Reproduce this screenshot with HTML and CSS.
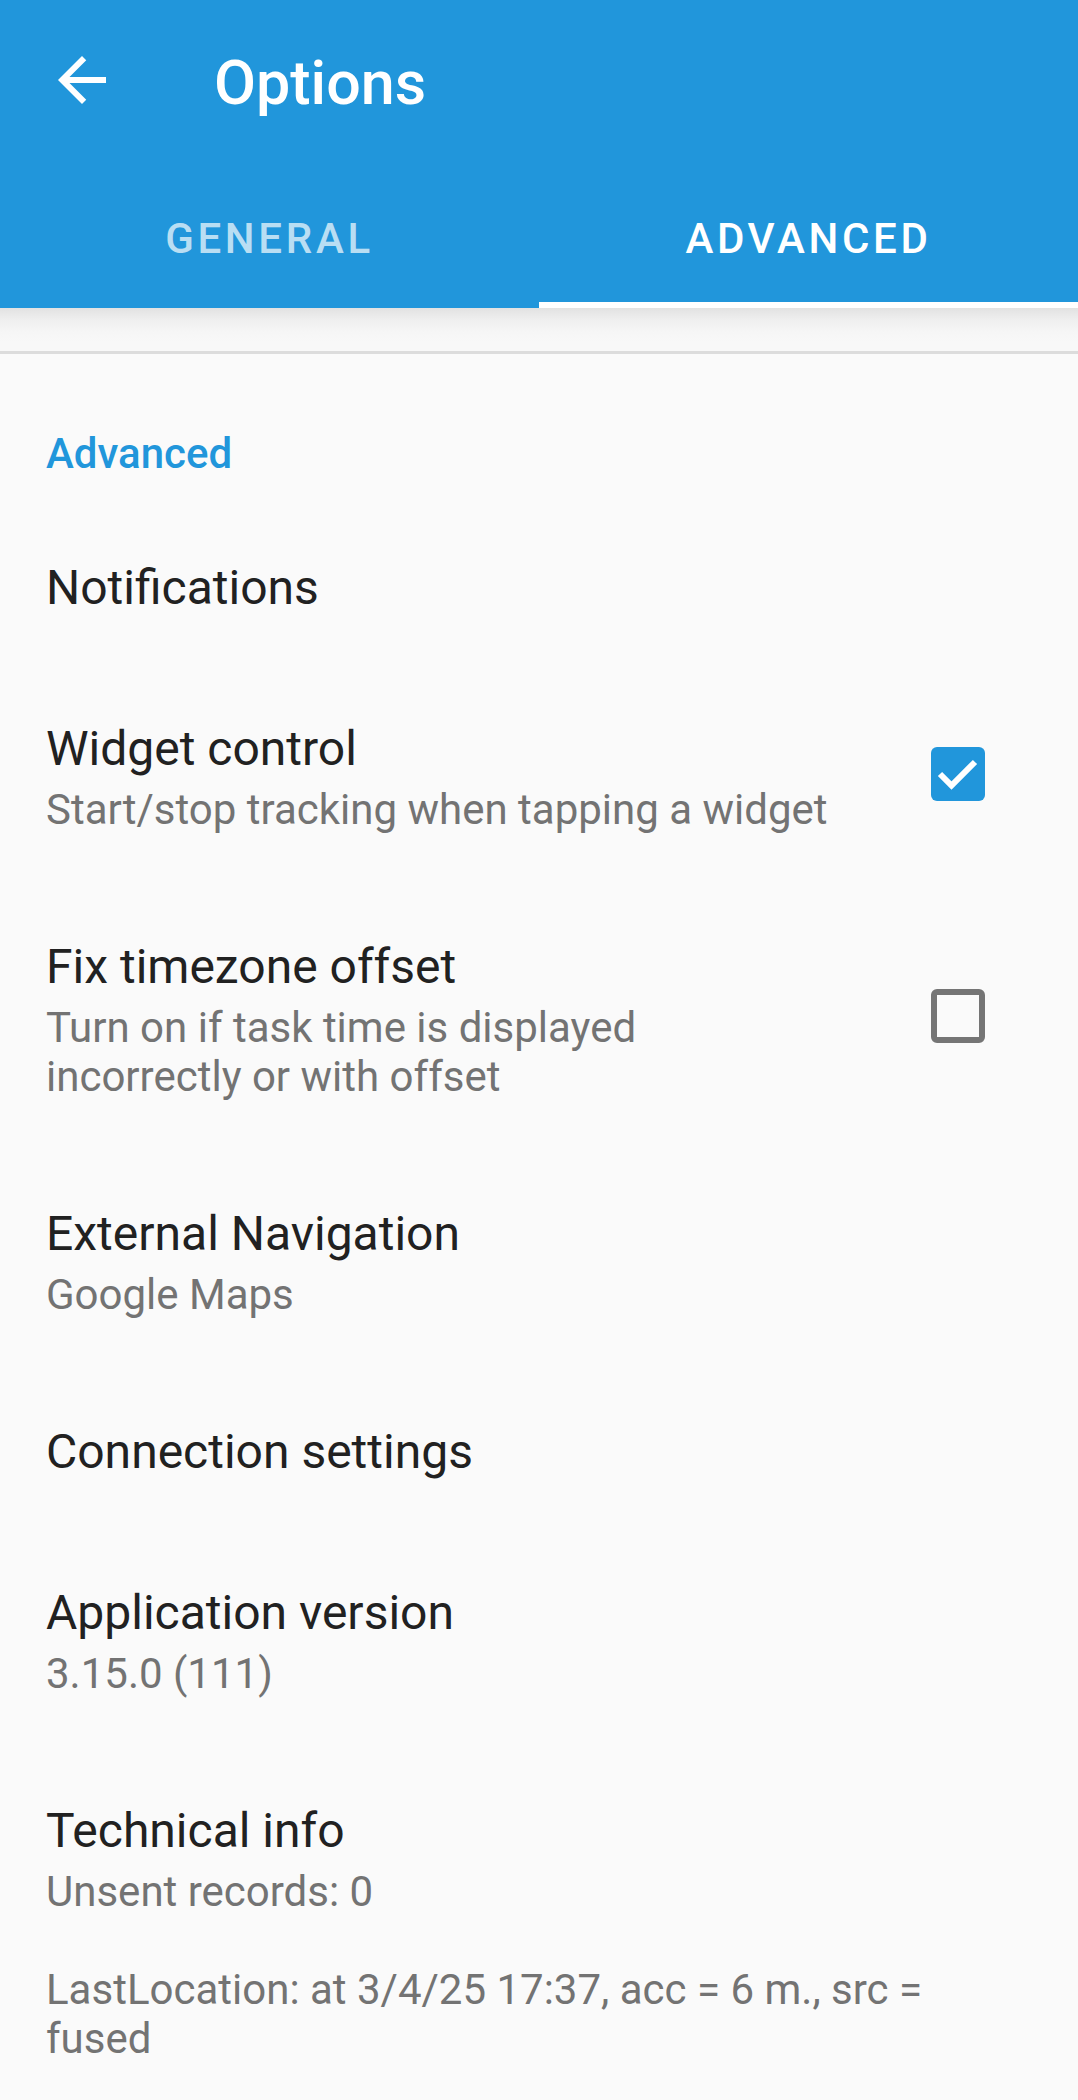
FILE: index.html
```html
<!DOCTYPE html>
<html lang="en">
<head>
<meta charset="utf-8">
<title>Options</title>
<link rel="stylesheet" href="styles.css">
</head>
<body>
<header class="appbar">
  <div class="toolbar">
    <svg class="back" viewBox="0 0 24 24" aria-hidden="true"><path d="M20 11H7.83l5.59-5.59L12 4l-8 8 8 8 1.41-1.41L7.83 13H20v-2z" fill="#fff"/></svg>
    <h1 class="title">Options</h1>
  </div>
  <nav class="tabs">
    <div class="tab">GENERAL</div>
    <div class="tab active">ADVANCED</div>
  </nav>
</header>
<div class="band"></div>
<main class="prefs">
  <div class="category">Advanced</div>

  <div class="pref">
    <div class="text"><div class="ptitle">Notifications</div></div>
  </div>

  <div class="pref">
    <div class="text">
      <div class="ptitle">Widget control</div>
      <div class="summary">Start/stop tracking when tapping a widget</div>
    </div>
    <div class="widget">
      <span class="checkbox checked">
        <svg viewBox="0 0 54 54" aria-hidden="true"><polyline points="9,27 20.5,38.5 44,15" fill="none" stroke="#fff" stroke-width="6"/></svg>
      </span>
    </div>
  </div>

  <div class="pref">
    <div class="text">
      <div class="ptitle">Fix timezone offset</div>
      <div class="summary">Turn on if task time is displayed<br>incorrectly or with offset</div>
    </div>
    <div class="widget"><span class="checkbox"></span></div>
  </div>

  <div class="pref">
    <div class="text">
      <div class="ptitle">External Navigation</div>
      <div class="summary">Google Maps</div>
    </div>
  </div>

  <div class="pref">
    <div class="text"><div class="ptitle">Connection settings</div></div>
  </div>

  <div class="pref">
    <div class="text">
      <div class="ptitle">Application version</div>
      <div class="summary">3.15.0 (111)</div>
    </div>
  </div>

  <div class="pref">
    <div class="text">
      <div class="ptitle">Technical info</div>
      <div class="summary">Unsent records: 0<br><br>LastLocation: at 3/4/25 17:37, acc = 6 m., src =<br>fused</div>
    </div>
  </div>
</main>
</body>
</html>
```
FILE: styles.css
```css
html, body {
  margin: 0;
  padding: 0;
}
body {
  background: #fafafa;
  font-family: Roboto, "Noto Sans", "Liberation Sans", sans-serif;
  color: #212121;
  width: 1078px;
}

.appbar {
  background: #2196db;
}
.toolbar {
  height: 168px;
  box-sizing: border-box;
  display: flex;
  align-items: flex-start;
  padding: 44px 0 0 46px;
}
.back {
  width: 72px;
  height: 72px;
  flex: none;
}
.title {
  margin: 4px 0 0 96px;
  font-size: 61px;
  line-height: 70px;
  font-weight: 500;
  color: #fff;
}
.tabs {
  display: flex;
  height: 140px;
}
.tab {
  flex: 1;
  display: flex;
  align-items: center;
  justify-content: center;
  font-size: 42px;
  font-weight: 500;
  letter-spacing: 3.7px;
  color: rgba(255, 255, 255, 0.7);
}
.tab.active {
  color: #fff;
  box-shadow: inset 0 -6px 0 #fff;
}

.band {
  height: 43px;
  background: linear-gradient(to bottom, #e2e2e2 0, #efefef 12px, #f6f6f6 24px, #f8f8f8 34px, #f8f8f8 100%);
  border-bottom: 3px solid #dcdcdc;
}

.category {
  margin-top: 75px;
  margin-bottom: 30px;
  padding: 0 46px;
  font-size: 42px;
  line-height: 49px;
  font-weight: 500;
  color: #2196db;
}

.pref {
  display: flex;
  align-items: center;
  padding: 52px 48px 53px 46px;
}
.text {
  flex: 1;
  min-width: 0;
}
.ptitle {
  font-size: 48px;
  line-height: 56px;
  color: #212121;
}
.summary {
  margin-top: 8px;
  font-size: 42px;
  line-height: 49px;
  color: #737373;
}
.widget {
  flex: none;
  margin: 0 45px 8px 40px;
  width: 54px;
  height: 54px;
}
.checkbox {
  display: block;
  box-sizing: border-box;
  width: 54px;
  height: 54px;
  border: 6px solid #757575;
  border-radius: 6px;
}
.checkbox.checked {
  border: none;
  background: #2196db;
}
.checkbox svg {
  display: block;
  width: 54px;
  height: 54px;
}
```
